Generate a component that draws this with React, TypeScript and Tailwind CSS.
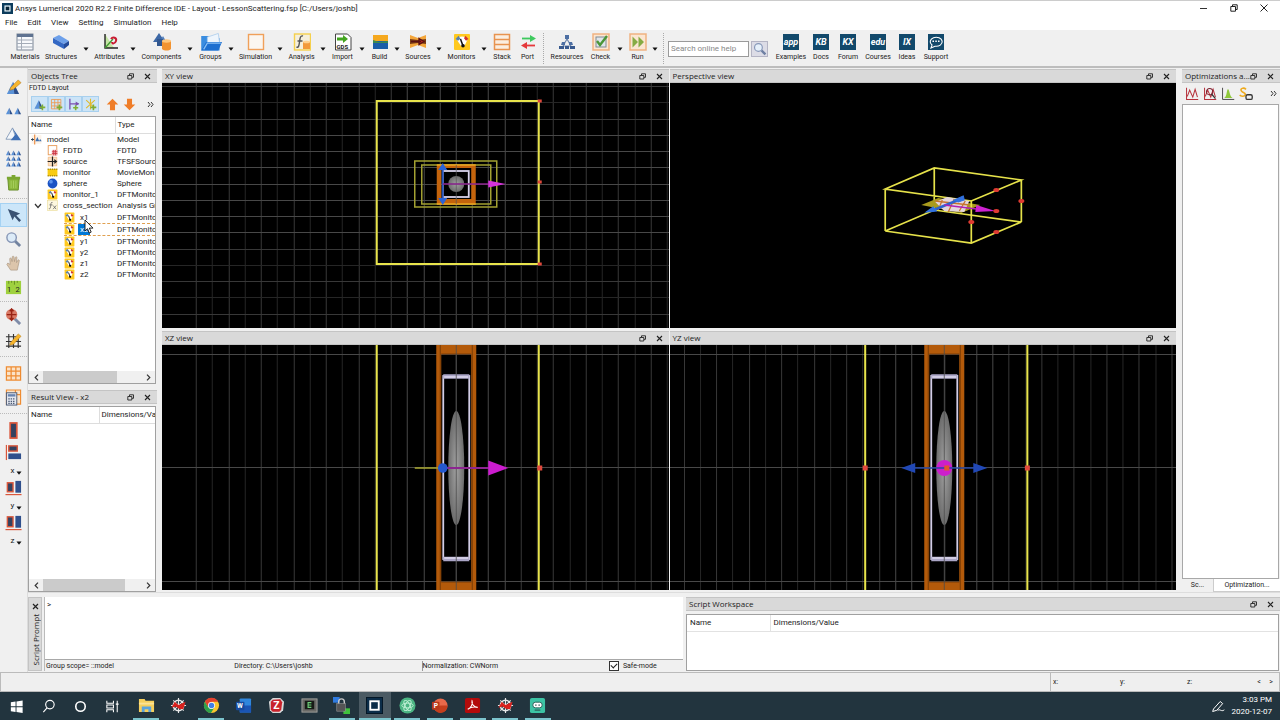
import React from "react";

type Draw = React.ReactNode;

function Ico({ s = 18, children }: { s?: number; children?: Draw }) {
  return (
    <svg width={s} height={s} viewBox="0 0 18 18" fill="none" className="shrink-0" aria-hidden="true">
      {children}
    </svg>
  );
}

function Badge({ label }: { label: string }) {
  return (
    <span className="flex h-4 w-4 items-center justify-center bg-[#12496b] text-[9px] leading-none font-bold text-white italic">
      {label}
    </span>
  );
}

const Caret = () => (
  <svg width="6" height="4" viewBox="0 0 6 4" aria-hidden="true">
    <path d="M0.5 0.5h5L3 3.7z" fill="#111" />
  </svg>
);

const monitorIcon = (s: number) => (
  <Ico s={s}>
    <rect x="1" y="1" width="16" height="16" rx="1" fill="#ffc91f" />
    <path d="M3 5.500a8 6 0 0 1 12 0L11.500 13H8z" fill="#fff" />
    <path d="M2.500 6L5.500 2.800l2 3-2.500 2z" fill="#5b82a8" />
    <path d="M15.500 6L12.500 2.800l-1.500 2.400 2 2.600z" fill="#d2342a" />
    <path d="M7.500 6l2.500 7" stroke="#111" strokeWidth="1.500" />
    <circle cx="10" cy="12.800" r="1.800" fill="#111" />
  </Ico>
);

type Tool = { name: string; w: string; icon: Draw; menu?: boolean };

const mainTools: Tool[] = [
  {
    name: "Materials",
    w: "w-8",
    icon: (
      <Ico>
        <rect x="1" y="1" width="16" height="16" fill="#f7f9fc" stroke="#7d8797" />
        <rect x="1" y="1" width="16" height="3" fill="#5f7391" />
        <path d="M1 7h16M1 10.5h16M1 14h16M5.5 4v13" stroke="#a4acb8" />
      </Ico>
    ),
  },
  {
    name: "Structures",
    w: "w-10",
    menu: true,
    icon: (
      <Ico>
        <path d="M1 5l6-3 10 6-5 3z" fill="#6da0ea" />
        <path d="M1 5l11 6v5L1 10z" fill="#3468c4" />
        <path d="M12 11l5-3v4l-5 4z" fill="#234a99" />
      </Ico>
    ),
  },
  {
    name: "Attributes",
    w: "w-[37px]",
    menu: true,
    icon: (
      <Ico>
        <path d="M4 1l9 14H4z" fill="#c4e6a3" />
        <path d="M4 1v14h13" stroke="#222" strokeWidth="1.4" />
        <path d="M4 15l8-9" stroke="#3f9a30" strokeWidth="1.3" />
        <path d="M10 6c2-3 6-1 5 2s-4 3-4 1" stroke="#c81d32" strokeWidth="2" />
      </Ico>
    ),
  },
  {
    name: "Components",
    w: "w-[47px]",
    menu: true,
    icon: (
      <Ico>
        <path d="M6 0l6 9H0z" fill="#3d68a6" />
        <path d="M10 3l4 7H6z" fill="#4f7dbb" />
        <path d="M4 6h6v7H4z" fill="#32578f" />
        <path d="M9 8h9v8c-2 2-7 2-9 0z" fill="#f29331" />
        <ellipse cx="13.500" cy="8" rx="4.500" ry="1.700" fill="#ffc77d" />
      </Ico>
    ),
  },
  {
    name: "Groups",
    w: "w-[31px]",
    menu: true,
    icon: (
      <Ico s={22}>
        <path d="M1 4h6l1 2h8v10H1z" fill="#3a8de0" />
        <path d="M6 5l9-3 1 8H6z" fill="#eef5fc" stroke="#a5c8ea" strokeWidth=".6" />
        <path d="M1 16l4-7h13l-3 7z" fill="#1d6fd0" />
        <path d="M3 15l3-5h11" stroke="#8cc2f5" />
      </Ico>
    ),
  },
  {
    name: "Simulation",
    w: "w-[39px]",
    menu: true,
    icon: (
      <Ico>
        <rect x="1.500" y="1.500" width="15" height="15" fill="#fbf6f0" stroke="#f0a05a" strokeWidth="1.400" />
      </Ico>
    ),
  },
  {
    name: "Analysis",
    w: "w-[33px]",
    menu: true,
    icon: (
      <Ico>
        <rect x="1.500" y="1" width="16" height="16" fill="#f5efdc" stroke="#f5d04c" strokeWidth="1.400" />
        <path d="M10 3c-3-1-3 3-3.500 6S6 15 3.500 14M4.500 8h5" stroke="#555" strokeWidth="1.400" />
        <path d="M10 9h7v7h-7z" fill="#f29a3c" />
        <ellipse cx="13.500" cy="9" rx="3.500" ry="1.300" fill="#ffd08e" />
      </Ico>
    ),
  },
  {
    name: "Import",
    w: "w-[29px]",
    menu: true,
    icon: (
      <Ico>
        <path d="M1.500 1h12l3.500 3.500V17H1.500z" fill="#fff" stroke="#444" />
        <path d="M3 4.500h6V2l5 4-5 4V7.500H3z" fill="#43a51f" />
        <text x="2.500" y="15.500" fontSize="6" fontWeight="bold" fill="#222">
          GDS
        </text>
      </Ico>
    ),
  },
  {
    name: "Build",
    w: "w-[25px]",
    menu: true,
    icon: (
      <Ico>
        <path d="M2 2h15v8H2z" fill="#f5a81e" />
        <path d="M2 8l15 0v8H2z" fill="#1b5da8" />
        <path d="M2 7l6 2 9-1v2H2z" fill="#3c8b4f" />
      </Ico>
    ),
  },
  {
    name: "Sources",
    w: "w-8",
    menu: true,
    icon: (
      <Ico>
        <path d="M1 2l8 3 8-3v13l-8-3-8 3z" fill="#f3a53a" />
        <path d="M1 6l8 1 8-1v5l-8-1-8 1z" fill="#7a3a12" />
        <path d="M2 8.500h10M10 5.500l5 3-5 3z" stroke="#5c1010" fill="#b3261b" strokeWidth="1.300" />
      </Ico>
    ),
  },
  { name: "Monitors", w: "w-[35px]", menu: true, icon: monitorIcon(18) },
  {
    name: "Stack",
    w: "w-[26px]",
    icon: (
      <Ico>
        <path d="M1.500 1.500h15v15h-15zM1.500 6.500h15M1.500 11.500h15" fill="#fbeee0" stroke="#e8934f" strokeWidth="1.500" />
      </Ico>
    ),
  },
  {
    name: "Port",
    w: "w-[25px]",
    icon: (
      <Ico>
        <path d="M3 5.500h9" stroke="#3ec95e" strokeWidth="1.800" />
        <path d="M11 2l6 3.500L11 9z" fill="#3ec95e" />
        <path d="M7 12.500h9" stroke="#e5383b" strokeWidth="1.800" />
        <path d="M8 9l-6 3.500L8 16z" fill="#e5383b" />
      </Ico>
    ),
  },
];

const runTools: Tool[] = [
  {
    name: "Resources",
    w: "w-[38px]",
    icon: (
      <Ico>
        <path d="M9 6L5 13M9 6l4 7M5 13h8" stroke="#6d86ad" strokeWidth="1.200" />
        <path d="M7 2h4v4H7z" fill="#4d6fa3" />
        <path d="M4 9h3v3H3zM11 9h3l1 3h-4z" fill="#4d6fa3" />
        <path d="M1 13h5v3H1zM12 13h5v3h-5zM7 13h4v3H7z" fill="#38598e" />
      </Ico>
    ),
  },
  {
    name: "Check",
    w: "w-[29px]",
    menu: true,
    icon: (
      <Ico>
        <rect x="1" y="1" width="16" height="16" fill="#fbe6d2" stroke="#efb281" strokeWidth="1.500" />
        <rect x="4" y="4" width="10" height="10" fill="#dfe5ea" stroke="#7f8b96" />
        <path d="M5 8l3 4 7-9" stroke="#4a9638" strokeWidth="2.400" />
      </Ico>
    ),
  },
  {
    name: "Run",
    w: "w-[25px]",
    menu: true,
    icon: (
      <Ico>
        <rect x="1" y="1" width="16" height="16" fill="#fbe6d2" stroke="#efb281" strokeWidth="1.500" />
        <path d="M3.500 3.500L9 9l-5.500 5.500zM9.500 3.500L15 9l-5.500 5.500z" fill="#86ab43" />
      </Ico>
    ),
  },
];

const helpTools: Tool[] = [
  { name: "Examples", w: "w-[34px]", icon: <Badge label="app" /> },
  { name: "Docs", w: "w-[26px]", icon: <Badge label="KB" /> },
  { name: "Forum", w: "w-7", icon: <Badge label="KX" /> },
  { name: "Courses", w: "w-8", icon: <Badge label="edu" /> },
  { name: "Ideas", w: "w-[26px]", icon: <Badge label="IX" /> },
  {
    name: "Support",
    w: "w-8",
    icon: (
      <Ico>
        <rect x="1" y="1" width="16" height="16" fill="#12496b" />
        <path d="M4 15l1-3a6 4.500 0 1 1 3 1.200z" stroke="#fff" strokeWidth="1.100" />
        <path d="M5.500 8.300h1.500M8.300 8.300h1.500M11 8.300h1.500" stroke="#fff" strokeWidth="1.500" />
      </Ico>
    ),
  },
];

function ToolButtons({ tools }: { tools: Tool[] }) {
  return (
    <>
      {tools.map((t) => (
        <div key={t.name} className="flex shrink-0">
          <button className={`flex flex-col items-center text-[7px] leading-[10px] text-[#222] ${t.w}`}>
            <span className="flex h-[18px] items-center">{t.icon}</span>
            <span className="mt-px">{t.name}</span>
          </button>
          {t.menu && (
            <button aria-label={`${t.name} menu`} className="flex w-2.5 items-center justify-center">
              <Caret />
            </button>
          )}
        </div>
      ))}
    </>
  );
}

const Grip = () => <div className="mx-[3px] w-0.5 border-l border-dotted border-[#aaa]" />;

function DockTitle({ title }: { title: string }) {
  return (
    <div className="flex h-[14px] shrink-0 items-center border-y border-[#c4c4c4] bg-[#d9d9d9] pr-1.5 pl-[3px] font-['Open_Sans','Noto_Sans',sans-serif] text-[8px] text-[#222]">
      <h2 className="pb-0.5 whitespace-nowrap">{title}</h2>
      <div className="ml-auto flex items-center gap-2.5">
        <button aria-label="Float">
          <svg width="7" height="7" viewBox="0 0 7 7" fill="none" stroke="#222" className="block">
            <path d="M2.500 2V.8h4v3.500H5M.8 2.500h4v3.500h-4z" strokeWidth=".9" />
          </svg>
        </button>
        <button aria-label="Close">
          <svg width="7" height="7" viewBox="0 0 7 7" stroke="#222" strokeWidth="1.100" className="block">
            <path d="M1 1l5 5M6 1L1 6" />
          </svg>
        </button>
      </div>
    </div>
  );
}

function HScroll({ thumb }: { thumb: string }) {
  return (
    <div className="mt-auto flex h-3 shrink-0 items-stretch bg-[#f0f0f0]">
      <button aria-label="Scroll left" className="flex w-[14px] items-center justify-center">
        <svg width="5" height="7" viewBox="0 0 5 7" fill="none" stroke="#333" strokeWidth="1.200">
          <path d="M4 .7L1.200 3.500 4 6.300" />
        </svg>
      </button>
      <div className="flex-1">
        <div className={`h-full bg-[#cbcbcb] ${thumb}`} />
      </div>
      <button aria-label="Scroll right" className="flex w-[14px] items-center justify-center">
        <svg width="5" height="7" viewBox="0 0 5 7" fill="none" stroke="#333" strokeWidth="1.200">
          <path d="M1 .7l2.800 2.800L1 6.300" />
        </svg>
      </button>
    </div>
  );
}

const More = ({ label }: { label: string }) => (
  <button aria-label={label} className="ml-auto pr-[3px]">
    <svg width="7" height="7" viewBox="0 0 7 7" fill="none" stroke="#333" className="block">
      <path d="M1 1l2 2.500L1 6M4 1l2 2.500L4 6" />
    </svg>
  </button>
);

/* ---------- left tool strip ---------- */

const pyramid = (x: number, y: number, k: number) => (
  <g key={`${x}-${y}`}>
    <path d={`M${x} ${y + k}L${x + k / 2} ${y}L${x + k * 0.6} ${y + k}z`} fill="#5a92d8" />
    <path d={`M${x + k / 2} ${y}L${x + k} ${y + k}H${x + k * 0.6}z`} fill="#2c4f8c" />
  </g>
);

const strip: { name: string; h: string; icon: Draw; on?: boolean; sep?: string; axis?: string }[] = [
  {
    name: "Edit",
    h: "h-6",
    icon: (
      <Ico s={17}>
        {pyramid(2, 4, 13)}
        <path d="M6 10l8-8 3 3-8 7-4 1z" fill="#f7b52c" stroke="#a66a10" strokeWidth=".5" />
      </Ico>
    ),
  },
  { name: "Duplicate", h: "h-6", icon: <Ico s={17}>{pyramid(1, 6, 7)}{pyramid(10, 6, 7)}</Ico> },
  {
    name: "Mirror",
    h: "h-6",
    icon: (
      <Ico s={17}>
        <path d="M1 14L8 2l4 12z" fill="#f4f7fb" stroke="#7d93b3" strokeWidth=".9" />
        <path d="M8 2l9 13H6l5-6z" fill="#3f6fb5" />
      </Ico>
    ),
  },
  {
    name: "Array",
    h: "h-6",
    icon: <Ico s={17}>{[1, 7, 13].flatMap((y) => [1, 6.5, 12].map((x) => pyramid(x, y - 0.5, 5)))}</Ico>,
  },
  {
    name: "Delete",
    h: "h-6",
    icon: (
      <Ico s={17}>
        <path d="M3 5h12l-1 12H4z" fill="#8cb83c" stroke="#668c26" />
        <path d="M2 3h14v2.500H2zM7 1h4v2H7z" fill="#7aa630" />
        <path d="M6.500 7v8M9 7v8M11.500 7v8" stroke="#a9cf60" />
      </Ico>
    ),
  },
  {
    name: "Select",
    h: "h-6",
    on: true,
    sep: "my-1",
    icon: (
      <Ico s={17}>
        <path d="M3 2l5 12 2-4 5 6 2-2-5-5 4-2z" fill="#3a5273" />
      </Ico>
    ),
  },
  {
    name: "Zoom",
    h: "h-6",
    icon: (
      <Ico s={17}>
        <path d="M10 10l6 6" stroke="#7283a0" strokeWidth="3" />
        <circle cx="7" cy="7" r="5" fill="#dcebf8" stroke="#8595b5" strokeWidth="1.500" />
      </Ico>
    ),
  },
  {
    name: "Pan",
    h: "h-6",
    icon: (
      <Ico s={17}>
        <path
          d="M6 16L2 10l1-1.500L5.500 10 5 4c0-1 1.500-1 1.800 0L7.500 7l.2-5c0-1 1.600-1 1.800 0L10 7l1-4.500c.3-1 1.700-.8 1.600.3L12.200 8l1.500-2.500c.5-.8 1.700-.2 1.400.7L13 16z"
          fill="#dcc5ab"
          stroke="#a8957f"
          strokeWidth=".7"
        />
      </Ico>
    ),
  },
  {
    name: "Ruler",
    h: "h-6",
    icon: (
      <Ico s={17}>
        <rect x="1" y="2" width="16" height="14" fill="#9fd13f" />
        <path d="M4 2v3M7 2v2M10 2v4M13 2v2" stroke="#557a1c" strokeWidth=".8" />
        <text x="2" y="14" fontSize="8" fill="#222">
          1
        </text>
        <text x="11" y="14" fontSize="8" fill="#222">
          2
        </text>
      </Ico>
    ),
  },
  {
    name: "Zoom extent",
    h: "h-6",
    sep: "my-0.5",
    icon: (
      <Ico s={17}>
        <path d="M10 11l6 6" stroke="#7f8ca8" strokeWidth="3" />
        <circle cx="7" cy="7" r="6" fill="#d97a66" />
        <path d="M7 2v10M2 7h10M5 3.500L7 1l2 2.500M5 10.500L7 13l2-2.500" stroke="#9a2415" strokeWidth="1.500" />
      </Ico>
    ),
  },
  {
    name: "Grid",
    h: "h-6",
    icon: (
      <Ico s={17}>
        <path d="M4 2v15M9 2v15M14 6v11M1 5h15M1 10h16M1 15h16" stroke="#333" strokeWidth="1.200" />
        <path d="M6 11l8-9 3 2.500L9 13l-4 1z" fill="#f7b52c" stroke="#b0740f" strokeWidth=".5" />
      </Ico>
    ),
  },
  {
    name: "Mesh",
    h: "h-6",
    sep: "my-1",
    icon: (
      <Ico s={17}>
        <path d="M1.500 2h15v14h-15zM6.500 2v14M11.500 2v14M1.500 6.500h15M1.500 11.500h15" fill="#fbe3c8" stroke="#ee8b31" strokeWidth="1.300" />
      </Ico>
    ),
  },
  {
    name: "Calculator",
    h: "h-6",
    icon: (
      <Ico s={17}>
        <path d="M1.500 1h15v15h-15zM11 1v15M1 6h15" fill="#fbe3c8" stroke="#ee8b31" strokeWidth="1.200" />
        <rect x="1.500" y="4" width="11" height="13" fill="#e3e7ef" stroke="#4b5a75" />
        <rect x="3" y="5.500" width="8" height="2.500" fill="#6783b0" />
        <path d="M3.500 10.500h7.500M3.500 13h7.500M3.500 15.200h7.500" stroke="#4b5a75" strokeWidth="1.300" strokeDasharray="1.500 1" />
      </Ico>
    ),
  },
  {
    name: "Align center",
    h: "h-6",
    sep: "my-1",
    icon: (
      <Ico s={17}>
        <rect x="5.500" y="1" width="7" height="16" fill="#34415f" stroke="#d9573c" strokeWidth="1.800" />
      </Ico>
    ),
  },
  {
    name: "Align x",
    h: "h-[21px]",
    axis: "x",
    icon: (
      <Ico s={17}>
        <path d="M1.500 1v16" stroke="#d9573c" strokeWidth="1.300" />
        <rect x="4" y="2" width="9" height="5.500" fill="#34415f" stroke="#d9573c" strokeWidth="1.500" />
        <rect x="3.500" y="10" width="13.500" height="6" fill="#2f4f8c" />
      </Ico>
    ),
  },
  {
    name: "Align y",
    h: "h-[21px]",
    axis: "y",
    icon: (
      <Ico s={17}>
        <path d="M.5 16.500h17" stroke="#d9573c" strokeWidth="1.300" />
        <rect x="2.500" y="4" width="6" height="9.500" fill="#34415f" stroke="#d9573c" strokeWidth="1.500" />
        <rect x="11" y="2" width="6" height="12.500" fill="#2f4f8c" />
      </Ico>
    ),
  },
  {
    name: "Align z",
    h: "h-[21px]",
    axis: "z",
    icon: (
      <Ico s={17}>
        <path d="M.5 16.500h17" stroke="#d9573c" strokeWidth="1.300" />
        <rect x="2.500" y="3" width="6" height="10.500" fill="#34415f" stroke="#d9573c" strokeWidth="1.500" />
        <rect x="11" y="2" width="6" height="12.500" fill="#2f4f8c" />
      </Ico>
    ),
  },
];

/* ---------- objects tree ---------- */

const fx = (
  <Ico s={11}>
    <rect x="1" y="1" width="16" height="16" fill="#fdf7df" stroke="#eadb95" />
    <path d="M9 4C6 3 6.500 7 6 10s-.500 5-3 4M4 8h5M10 9l5 6M15 9l-5 6" stroke="#666" strokeWidth="1.300" />
  </Ico>
);

const tree: { name: string; type: string; level: number; icon: Draw; open?: boolean; sel?: boolean }[] = [
  {
    name: "model",
    type: "Model",
    level: 0,
    icon: (
      <Ico s={11}>
        <path d="M1 2h16v14H1z" fill="#fdf3e8" />
        <path d="M6 1v16" stroke="#ee9550" strokeWidth="2" />
        <path d="M0 9h5M2.500 7v4" stroke="#345" strokeWidth="1.600" />
        <path d="M7 12l3.500-7 3 7zM13 12l2-4 2.500 4z" fill="#3d6fae" />
      </Ico>
    ),
  },
  {
    name: "FDTD",
    type: "FDTD",
    level: 1,
    icon: (
      <Ico s={11}>
        <rect x="2" y="1" width="14" height="15" fill="#fff" stroke="#e79a57" strokeWidth="1.500" />
        <path d="M8 8h9v9H8z" fill="#f3b6bb" />
        <path d="M8 11h9M8 14h9M11 8v9M14 8v9" stroke="#c9303d" strokeWidth="1.300" />
      </Ico>
    ),
  },
  {
    name: "source",
    type: "TFSFSource",
    level: 1,
    icon: (
      <Ico s={11}>
        <path d="M2 2h14v14H2z" fill="#fbe0c2" stroke="#eeae70" />
        <path d="M9 1v16M1 9h13" stroke="#222" strokeWidth="2" />
        <path d="M12 5l5 4-5 4z" fill="#222" />
      </Ico>
    ),
  },
  {
    name: "monitor",
    type: "MovieMon",
    level: 1,
    icon: (
      <Ico s={11}>
        <path d="M1 3h16v12H1z" fill="#f8cb14" />
        <path d="M1 3.500h16M1 14.500h16" stroke="#7c6000" strokeWidth="1.500" strokeDasharray="2 1.500" />
      </Ico>
    ),
  },
  {
    name: "sphere",
    type: "Sphere",
    level: 1,
    icon: (
      <Ico s={11}>
        <circle cx="9" cy="9" r="8" fill="#1b53c4" />
        <circle cx="6.500" cy="6" r="3" fill="#5b92ec" />
      </Ico>
    ),
  },
  { name: "monitor_1", type: "DFTMonitor", level: 1, icon: monitorIcon(11) },
  { name: "cross_section", type: "Analysis Gr", level: 1, icon: fx, open: true },
  { name: "x1", type: "DFTMonitor", level: 2, icon: monitorIcon(11) },
  { name: "x2", type: "DFTMonitor", level: 2, icon: monitorIcon(11), sel: true },
  { name: "y1", type: "DFTMonitor", level: 2, icon: monitorIcon(11) },
  { name: "y2", type: "DFTMonitor", level: 2, icon: monitorIcon(11) },
  { name: "z1", type: "DFTMonitor", level: 2, icon: monitorIcon(11) },
  { name: "z2", type: "DFTMonitor", level: 2, icon: monitorIcon(11) },
];

const indent = ["pl-0.5", "pl-[3px]", "pl-[35px]"];

const treeTools: Draw[] = [
  <>
    {pyramid(2, 3, 12)}
    <path d="M13 9v8M9 13h8" stroke="#7fae34" strokeWidth="2.200" />
  </>,
  <>
    <path d="M2 2h13v13H2zM2 6.500h13M2 11h13M6.500 2v13M11 2v13" stroke="#ee9a50" strokeWidth="1.200" />
    <path d="M13 9v8M9 13h8" stroke="#7fae34" strokeWidth="2.200" />
  </>,
  <>
    <path d="M4 1v15M4 8h12" stroke="#7a4fb0" strokeWidth="1.800" />
    <path d="M12 5l5 3-5 3z" fill="#7a4fb0" />
    <path d="M12 10v7M8.500 13.500h7" stroke="#7fae34" strokeWidth="2.200" />
  </>,
  <>
    <path d="M3 3l12 11M15 3L3 14M9 1v15" stroke="#e0b92a" strokeWidth="1.500" />
    <path d="M13 9v8M9 13h8" stroke="#7fae34" strokeWidth="2.200" />
  </>,
];

/* ---------- drawings of the four views ---------- */

const steps = Array.from({ length: 33 }, (_, i) => i - 16);
const shade = (i: number) => (Math.abs(i) <= 3 ? "#484848" : i % 2 ? "#262626" : "#383838");

function Vert({ cx, y, h }: { cx: number; y: number; h: number }) {
  return (
    <g>
      {steps.map((i) => (
        <path key={i} d={`M${Math.floor(cx + i * 16.24) + 0.5} ${y}v${h}`} stroke={shade(i)} />
      ))}
    </g>
  );
}

const Handle = ({ x, y }: { x: number; y: number }) => <rect x={x - 2.5} y={y - 2.5} width="5" height="5" fill="#e0483c" />;

function View({ title, box, children }: { title: string; box: string; children: Draw }) {
  return (
    <section className="flex min-h-0 min-w-0 flex-col">
      <DockTitle title={title} />
      <svg viewBox={box} preserveAspectRatio="xMidYMid slice" fill="none" className="min-h-0 w-full flex-1 bg-black" role="img" aria-label={title}>
        {children}
      </svg>
    </section>
  );
}

function Tall({ cx }: { cx: number }) {
  return (
    <g>
      <path d={`M${cx - 20} 345h40v245h-40zM${cx - 15} 354v228h30v-228z`} fill="#b35a0a" fillRule="evenodd" />
      <path d={`M${cx - 16} 345v245M${cx + 16} 345v245M${cx - 15} 354h30M${cx - 15} 582h30`} stroke="#7a3c06" />
      <rect x={cx - 13} y="376" width="26" height="183" stroke="#d3cde6" strokeWidth="1.800" />
      <path d={`M${cx - 13} 376.500h26M${cx - 13} 559h26`} stroke="#aaa5c6" strokeWidth="4.500" />
      <path d={`M${cx - 12} 377h24M${cx - 12} 558h24`} stroke="#dfdaf0" strokeWidth="1.500" />
      <ellipse cx={cx} cy="468" rx="8" ry="57" fill="url(#metal)" />
      <path d={`M${cx} 345v245`} stroke="#4c4c4c" strokeOpacity=".8" />
    </g>
  );
}

/* ---------- task bar ---------- */

const Redstar = () => (
  <Ico>
    <circle cx="9" cy="9" r="5.500" stroke="#e8e8e8" strokeWidth="1.600" />
    <path d="M9 1v16M1 9h16M3.500 3.500l11 11M14.500 3.500l-11 11" stroke="#e8e8e8" strokeWidth="1.200" />
    <path d="M1.500 11.500L5 5l4 3.500L16.500 5 14 13l-4.500-.5L6 10z" fill="#d8201c" />
  </Ico>
);

const apps: { name: string; icon: Draw; run?: boolean; active?: boolean }[] = [
  {
    name: "Files",
    run: true,
    icon: (
      <Ico>
        <path d="M1 2h6l1 2h9v12H1z" fill="#f6cf5c" />
        <path d="M1 6h16v2H1z" fill="#fbe294" />
        <path d="M4 16v-6h10v6h-3v-3H7v3z" fill="#5aa3dd" />
      </Ico>
    ),
  },
  { name: "Solver", icon: <Redstar /> },
  {
    name: "Browser",
    run: true,
    icon: (
      <Ico>
        <circle cx="9" cy="9" r="8" fill="#f9c62f" />
        <path d="M2 5a8 8 0 0 1 14 0H9L5.500 11z" fill="#e2412f" />
        <path d="M2 5a8 8 0 0 0 6.500 12l3.500-6-3 1-4-2z" fill="#2fa04c" />
        <circle cx="9" cy="9" r="3.700" fill="#fff" />
        <circle cx="9" cy="9" r="2.900" fill="#3f7fe8" />
      </Ico>
    ),
  },
  {
    name: "Word",
    icon: (
      <Ico>
        <rect x="5" y="1.500" width="12" height="15" rx="1" fill="#2f86dc" />
        <path d="M5 9h12v7.500H5z" fill="#1a55b5" />
        <rect x="1" y="5" width="9" height="9" rx="1" fill="#164a9e" />
        <text x="2" y="12" fontSize="7" fontWeight="bold" fill="#fff">
          W
        </text>
      </Ico>
    ),
  },
  {
    name: "Zotero",
    icon: (
      <Ico>
        <path d="M5 1h8l4 4-1 9-3 3H5l-3-3-1-9z" fill="#d9d9d9" />
        <path d="M5 3l8-.5 2 3-1 8-2 2H5l-2-2V5z" fill="#c9232c" />
        <text x="5.500" y="13" fontSize="11" fontWeight="bold" fill="#fff">
          Z
        </text>
      </Ico>
    ),
  },
  {
    name: "Editor",
    icon: (
      <Ico>
        <rect x="1" y="2" width="16" height="14" fill="#6a6a67" stroke="#a0a09c" />
        <rect x="4" y="4" width="10" height="9" fill="#171b17" />
        <path d="M11 6H7.500v5H11M7.500 8.500H11" stroke="#6fd07a" strokeWidth="1.200" />
      </Ico>
    ),
  },
  {
    name: "Remote",
    run: true,
    icon: (
      <Ico>
        <path d="M0 0h7v6H0z" fill="#2f7be0" />
        <path d="M11 12h7v6h-7z" fill="#3fc23c" />
        <path d="M6 8V5a3 3 0 0 1 6 0v3" stroke="#c8c8c8" strokeWidth="1.500" />
        <rect x="4" y="7" width="9" height="8" fill="#555" stroke="#999" strokeWidth=".6" />
      </Ico>
    ),
  },
  {
    name: "Lumerical",
    run: true,
    active: true,
    icon: (
      <Ico>
        <rect x=".5" y=".5" width="17" height="17" fill="#0b2c48" stroke="#041624" />
        <rect x="4.500" y="4.500" width="9" height="9" stroke="#fff" strokeWidth="2" />
      </Ico>
    ),
  },
  {
    name: "Atom",
    run: true,
    icon: (
      <Ico>
        <circle cx="9" cy="9" r="8.500" fill="#4cb583" />
        <ellipse cx="9" cy="9" rx="6" ry="2.500" stroke="#bff0d5" transform="rotate(60 9 9)" />
        <ellipse cx="9" cy="9" rx="6" ry="2.500" stroke="#bff0d5" transform="rotate(-60 9 9)" />
        <ellipse cx="9" cy="9" rx="6" ry="2.500" stroke="#bff0d5" />
      </Ico>
    ),
  },
  {
    name: "PowerPoint",
    run: true,
    icon: (
      <Ico>
        <circle cx="10" cy="9" r="7.500" fill="#e8694a" />
        <path d="M10 9h7.500A7.500 7.500 0 0 1 3 12z" fill="#c43e1c" />
        <rect x="1" y="5" width="8" height="8.500" rx="1" fill="#b9381a" />
        <text x="3" y="12" fontSize="7" fontWeight="bold" fill="#fff">
          P
        </text>
      </Ico>
    ),
  },
  {
    name: "Acrobat",
    run: true,
    icon: (
      <Ico>
        <rect x="1" y="1" width="16" height="16" rx="2" fill="#b30b0b" />
        <path d="M4 13c3-1 6-6 4.500-9-1 3 2 7 6 7-4-1-8 0-10.500 2z" stroke="#fff" strokeWidth="1.100" />
      </Ico>
    ),
  },
  { name: "Solver 2", run: true, icon: <Redstar /> },
  {
    name: "Recorder",
    run: true,
    icon: (
      <Ico>
        <rect x="1" y="1" width="16" height="16" rx="2" fill="#3cc3a4" />
        <rect x="4" y="5.500" width="10" height="6" rx="3" fill="#fff" stroke="#2b5e58" />
        <path d="M6.500 8.500h1.500M10 8.500h1.500M6 14h6" stroke="#2b5e58" strokeWidth="1.300" />
      </Ico>
    ),
  },
];

const systemApps: { name: string; icon: Draw }[] = [
  {
    name: "Start",
    icon: <path d="M3 4.500l5-.7v5H3zM9 3.600l6.500-.9v6.100H9zM3 9.700h5v5l-5-.7zM9 9.700h6.500v6.100L9 14.900z" fill="#fff" />,
  },
  {
    name: "Search",
    icon: (
      <g stroke="#fff" strokeWidth="1.200">
        <circle cx="10.500" cy="7" r="4.500" />
        <path d="M7.500 10.500L3.500 15" />
      </g>
    ),
  },
  { name: "Assistant", icon: <circle cx="9" cy="9" r="5" stroke="#fff" strokeWidth="1.700" /> },
  {
    name: "Task view",
    icon: <path d="M3 3v2.500h7V3M3 15v-2.500h7V15M3 7.500h7v3H3zM14 3v12M12.500 6.500h3" stroke="#fff" strokeWidth="1.100" />,
  },
];

export default function App() {
  return (
    <div className="flex h-screen flex-col overflow-hidden bg-[#f0f0f0] font-['Roboto','Open_Sans',sans-serif] text-[8px] leading-[11px] text-[#1c1c1c]">
      <header className="flex h-[15px] shrink-0 items-center border-t border-[#ccc] bg-white pl-0.5">
        <Ico s={11}>
          <rect width="18" height="18" fill="#0c3c5c" />
          <rect x="5" y="5" width="8" height="8" fill="#082436" stroke="#e8f4fa" strokeWidth="2" />
        </Ico>
        <h1 className="ml-0.5">Ansys Lumerical 2020 R2.2 Finite Difference IDE - Layout - LessonScattering.fsp [C:/Users/joshb]</h1>
        <div className="ml-auto flex items-center gap-[22px] pr-3">
          <button aria-label="Minimize">
            <svg width="8" height="8" viewBox="0 0 8 8" stroke="#333" className="block">
              <path d="M0 4.500h7" />
            </svg>
          </button>
          <button aria-label="Restore">
            <svg width="8" height="8" viewBox="0 0 8 8" stroke="#222" fill="none" className="block">
              <path d="M2.500 2V.8h4.700v4.700H6M.8 2.500h4.700v4.700H.8z" />
            </svg>
          </button>
          <button aria-label="Close window">
            <svg width="8" height="8" viewBox="0 0 8 8" stroke="#222" className="block">
              <path d="M.5.5l7 7M7.500.5l-7 7" />
            </svg>
          </button>
        </div>
      </header>

      <nav className="flex h-[15px] shrink-0 items-center gap-2.5 bg-white pl-[5px]">
        {["File", "Edit", "View", "Setting", "Simulation", "Help"].map((m) => (
          <button key={m}>{m}</button>
        ))}
      </nav>

      <div className="flex h-9 shrink-0 items-stretch pt-[3px] pb-0.5 pl-[9px]">
        <ToolButtons tools={mainTools} />
        <Grip />
        <ToolButtons tools={runTools} />
        <Grip />
        <form className="mr-1.5 flex items-center gap-0.5" onSubmit={(e) => e.preventDefault()}>
          <input
            aria-label="Search online help"
            placeholder="Search online help"
            className="h-4 w-[81px] border border-[#9a9a9a] bg-white px-0.5 text-[8px] placeholder:text-[#888]"
          />
          <button aria-label="Search" className="flex h-4 w-[17px] items-center justify-center border border-[#b4b4c4] bg-[#dcdce6]">
            <Ico s={14}>
              <path d="M10 10l6 6" stroke="#6f80a3" strokeWidth="3" />
              <circle cx="7" cy="7" r="5" fill="#e6f0fa" stroke="#8797b8" strokeWidth="1.500" />
            </Ico>
          </button>
        </form>
        <ToolButtons tools={helpTools} />
      </div>

      <div className="flex min-h-0 flex-1 border-t-2 border-[#bdbdbd]">
        <aside className="flex w-7 shrink-0 flex-col border-r border-[#dcdcdc] pt-1.5">
          {strip.map((t) => (
            <React.Fragment key={t.name}>
              {t.sep && <div className={`border-t border-dotted border-[#bbb] ${t.sep}`} />}
              <button
                aria-label={t.name}
                className={`flex shrink-0 items-center justify-center ${t.h} ${t.on ? "border border-[#a5d2f3] bg-[#cce6f9]" : ""}`}
              >
                {t.icon}
              </button>
              {t.axis && (
                <button className="flex h-[14px] shrink-0 items-center justify-center gap-0.5 pl-1.5 text-[8px]">
                  {t.axis}
                  <span className="pt-1.5">
                    <Caret />
                  </span>
                </button>
              )}
            </React.Fragment>
          ))}
        </aside>

        <div className="flex min-w-0 flex-1 flex-col">
          <div className="flex min-h-0 flex-1 pt-px">
            <div className="flex w-[129px] shrink-0 flex-col">
              <section className="flex h-[315px] flex-col">
                <DockTitle title="Objects Tree" />
                <p className="h-[11px] pl-px text-[7px] leading-[10px]">FDTD Layout</p>
                <div className="flex h-5 items-center pl-[3px]">
                  {treeTools.map((d, i) => (
                    <button key={i} aria-label={`Add object ${i + 1}`} className="flex h-4 w-[17px] items-center justify-center border border-[#a8d0ee] bg-[#cce4f7]">
                      <Ico s={13}>{d}</Ico>
                    </button>
                  ))}
                  <button aria-label="Move up" className="ml-[7px]">
                    <Ico s={13}>
                      <path d="M9 1l8 8h-4.500v8h-7V9H1z" fill="#ef7d28" />
                    </Ico>
                  </button>
                  <button aria-label="Move down" className="ml-1">
                    <Ico s={13}>
                      <path d="M9 17l8-8h-4.500V1h-7v8H1z" fill="#ef7d28" />
                    </Ico>
                  </button>
                  <More label="More" />
                </div>
                <div className="relative mt-0.5 mr-px flex min-h-0 flex-1 flex-col overflow-hidden border border-[#a0a0a0] bg-white">
                  <table className="w-full table-fixed border-collapse text-left">
                    <thead>
                      <tr className="h-4 border-b border-[#ddd]">
                        <th className="w-[86px] border-r border-[#ddd] pl-0.5 font-normal">Name</th>
                        <th className="pl-0.5 font-normal">Type</th>
                      </tr>
                    </thead>
                  </table>
                  <table className="h-[147px] w-full table-fixed border-collapse text-left">
                    <tbody>
                      {tree.map((r) => (
                        <tr key={r.name}>
                          <td className={`w-[86px] p-0 ${indent[r.level]}`}>
                            <span className={`flex items-center gap-[3px] ${r.sel ? "border-y border-dashed border-[#e0a050]" : ""}`}>
                              {r.level === 1 && (
                                <span className="flex w-3 justify-center">
                                  {r.open && (
                                    <svg width="8" height="6" viewBox="0 0 8 6" fill="none" stroke="#333" strokeWidth="1.200">
                                      <path d="M1 1l3 3.500L7 1" />
                                    </svg>
                                  )}
                                </span>
                              )}
                              {r.icon}
                              <span className={r.sel ? "bg-[#0078d7] px-0.5 text-white" : "px-0.5"}>{r.name}</span>
                            </span>
                          </td>
                          <td className="overflow-hidden p-0 pl-0.5 whitespace-nowrap">
                            <span className={r.sel ? "block border-y border-dashed border-[#e0a050]" : "block"}>{r.type}</span>
                          </td>
                        </tr>
                      ))}
                    </tbody>
                  </table>
                  <svg width="10" height="15" viewBox="0 0 10 15" className="absolute top-[102px] left-[55px]" aria-hidden="true">
                    <path d="M1 1v11l2.500-2.300L5.200 14l2-.9-1.800-4H9z" fill="#fff" stroke="#111" strokeWidth=".9" />
                  </svg>
                  <HScroll thumb="w-3/4" />
                </div>
              </section>
              <section className="mt-1.5 flex min-h-0 flex-1 flex-col">
                <DockTitle title="Result View - x2" />
                <div className="mt-0.5 mr-px flex min-h-0 flex-1 flex-col overflow-hidden border border-[#a0a0a0] bg-white">
                  <table className="w-full table-fixed border-collapse text-left">
                    <thead>
                      <tr className="h-4 border-b border-[#ddd]">
                        <th className="w-[70px] border-r border-[#ddd] pl-0.5 font-normal">Name</th>
                        <th className="overflow-hidden pl-0.5 font-normal whitespace-nowrap">Dimensions/Va</th>
                      </tr>
                    </thead>
                  </table>
                  <HScroll thumb="w-5/6" />
                </div>
              </section>
            </div>

            <main className="mr-1.5 ml-[5px] grid min-w-0 flex-1 grid-cols-2 grid-rows-2 gap-x-px gap-y-[3px] pb-0.5">
              <View title="XY view" box="162 83 507 245">
                <defs>
                  <radialGradient id="metal">
                    <stop offset="0" stopColor="#a2a2a2" />
                    <stop offset="1" stopColor="#6c6c6c" />
                  </radialGradient>
                </defs>
                <Vert cx={456.5} y={83} h={245} />
                {steps.slice(8, 26).map((i) => (
                  <path key={i} d={`M150 ${Math.floor(184 + i * 16.25) + 0.5}h540`} stroke={shade(i)} />
                ))}
                <rect x="377" y="101" width="162" height="163" stroke="#e8e44c" strokeWidth="2" />
                <rect x="415" y="161" width="82" height="46" stroke="#a3a132" strokeWidth="1.500" />
                <rect x="422" y="165" width="69" height="39" stroke="#a3a132" strokeWidth="1.500" />
                <path d="M437 165h39v39h-39zM441.500 168v31h30v-31z" fill="#c4640c" fillRule="evenodd" />
                <path d="M437 165h39M437 204h39" stroke="#eda822" strokeWidth="1.500" />
                <rect x="443" y="171" width="26" height="26" fill="#000" stroke="#d8d2ec" strokeWidth="1.800" />
                <circle cx="456.500" cy="184" r="8" fill="url(#metal)" />
                <path d="M456.500 165v39M441 184h30" stroke="#555" strokeOpacity=".7" />
                <path d="M443 167v34" stroke="#2453bd" strokeWidth="1.800" />
                <path d="M443 163l4.500 7h-9zM443 205l4.500-7h-9z" fill="#2a63d8" />
                <path d="M443 184h46" stroke="#8c2590" strokeWidth="1.500" />
                <path d="M488.500 180.500v7l17.500-3.500z" fill="#d633da" />
                <path d="M538 101h4M538 182h4M538 264h4" stroke="#e0483c" strokeWidth="3" />
              </View>

              <View title="Perspective view" box="670 83 506 245">
                <g stroke="#e6e24a" strokeWidth="1.700">
                  <path d="M885 189l49-21 87 12-50 21zM885 231l86 12 50-21M885 189v42M934 168v42M1021 180v42M885 231l49-21 87 12" />
                </g>
                <path d="M921 205l17-7 42 7-19 8z" fill="#a99b1e" />
                <path d="M935 202l12-5 22 4-5 11-20-1z" fill="#e3d5de" />
                <path d="M938 210l4-10M948 212l6-13M959 211l6-10M935 201l34 4" stroke="#c7752e" strokeWidth="1.300" />
                <path d="M971 201v42" stroke="#e6e24a" strokeWidth="1.700" />
                <path d="M931 211l27-11" stroke="#2d62cf" strokeWidth="2.500" />
                <path d="M926 212l7-5 3 4zM954 200l9-4 1 4-6 2z" fill="#3272e0" stroke="#3272e0" />
                <path d="M944 205l32 4" stroke="#b020b5" strokeWidth="1.500" />
                <path d="M976 205l19 6-20 1z" fill="#cf22d2" />
                {[
                  [996, 190],
                  [1021, 201],
                  [996, 211],
                  [971, 222],
                  [996, 232],
                ].map(([x, y]) => (
                  <ellipse key={`${x}-${y}`} cx={x} cy={y} rx="3" ry="2" fill="#de3b32" />
                ))}
              </View>

              <View title="XZ view" box="162 345 507 245">
                <Vert cx={456.5} y={345} h={245} />
                <path d="M150 354.500h530M150 467.500h530M150 581.500h530" stroke="#484848" />
                <path d="M377 345v245M539 345v245" stroke="#e8e44c" strokeWidth="2" />
                <Tall cx={456.5} />
                <path d="M415 468h24" stroke="#a3a132" strokeWidth="1.600" />
                <path d="M443 468h46" stroke="#8c2590" strokeWidth="1.800" />
                <path d="M488.500 460.500v15l20-7.500z" fill="#cc1ccf" />
                <circle cx="443" cy="468" r="4.800" fill="#2458cf" />
                <Handle x={540} y={468} />
              </View>

              <View title="YZ view" box="670 345 506 245">
                <Vert cx={944} y={345} h={245} />
                <path d="M660 354.500h530M660 467.500h530M660 581.500h530" stroke="#484848" />
                <path d="M865 345v245M1027 345v245" stroke="#e8e44c" strokeWidth="2" />
                <Tall cx={944} />
                <circle cx="944" cy="468" r="8" fill="#cc1fcb" />
                <path d="M914 468h60" stroke="#2447a5" strokeWidth="1.600" />
                <path d="M915 463v10l-14-5zM973 463v10l14-5z" fill="#2148b5" />
                <rect x="944" y="465.500" width="5" height="5" fill="#e4532e" />
                <Handle x={865} y={468} />
                <Handle x={1027} y={468} />
              </View>
            </main>

            <section className="flex w-[98px] shrink-0 flex-col">
              <DockTitle title="Optimizations a..." />
              <div className="flex h-[21px] items-center gap-1 pl-[3px]">
                {[
                  <path key="a" d="M2 1v15h15M3 12l3-8 4 9 3-10 3 10" stroke="#b5303a" strokeWidth="1.300" />,
                  <g key="b">
                    <path d="M2 1v15h15M3 12l3-8 4 9 3-10 3 10" stroke="#b5303a" strokeWidth="1.300" />
                    <circle cx="8.500" cy="6" r="4" stroke="#7c2030" strokeWidth="1.300" />
                    <path d="M11 9l5 6" stroke="#333" strokeWidth="1.600" />
                  </g>,
                  <g key="c">
                    <path d="M4 14c4-1 3-11 5-11s2 10 6 11z" fill="#8fc93a" />
                    <path d="M2 1v15h15" stroke="#444" strokeWidth="1.200" />
                  </g>,
                  <g key="d">
                    <path d="M9 3C6 0 1 2 3 5s6 2 5 5-6 2-7 0" stroke="#eeaa1e" strokeWidth="2" />
                    <rect x="9" y="10" width="8" height="6" rx="2" stroke="#333" strokeWidth="1.700" />
                  </g>,
                ].map((d, i) => (
                  <button key={i} aria-label={`Optimization tool ${i + 1}`}>
                    <Ico s={14}>{d}</Ico>
                  </button>
                ))}
                <More label="More tools" />
              </div>
              <div className="mr-px flex-1 border border-[#a8a8a8] bg-white" />
              <div role="tablist" className="flex h-[13px] text-[7px]">
                <button role="tab" className="w-8 border-r border-[#ccc]">
                  Sc...
                </button>
                <button role="tab" aria-selected="true" className="flex-1 border-b border-[#ccc] bg-white">
                  Optimization...
                </button>
              </div>
            </section>
          </div>

          <div className="flex h-20 shrink-0 border-t border-[#ddd] pt-1 pb-px">
            <section className="flex min-w-0 flex-[655_1_0%]">
              <div className="mr-0.5 flex w-[14px] shrink-0 flex-col items-center gap-1 border border-[#c4c4c4] bg-[#d9d9d9] pt-[5px]">
                <button aria-label="Close script prompt">
                  <svg width="7" height="7" viewBox="0 0 7 7" stroke="#222" strokeWidth="1.200" className="block">
                    <path d="M1 1l5 5M6 1L1 6" />
                  </svg>
                </button>
                <h2 className="rotate-180 font-['Open_Sans','Noto_Sans',sans-serif] text-[8px] whitespace-nowrap [writing-mode:vertical-rl]">Script Prompt</h2>
              </div>
              <div className="flex min-w-0 flex-1 flex-col border-l border-[#bbb]">
                <textarea aria-label="Script prompt" defaultValue=">" className="block min-h-0 w-full flex-1 resize-none border-0 bg-white p-0.5 leading-[11px]" />
                <div className="grid h-3 shrink-0 grid-cols-[188fr_187fr_187fr_74fr] items-center border-t border-[#a8a8a8] pl-px text-[7px] leading-[10px]">
                  <span>Group scope= ::model</span>
                  <span>Directory: C:\Users\joshb</span>
                  <span className="border-l border-[#999]">Normalization: CWNorm</span>
                  <label className="flex items-center gap-1">
                    <input
                      type="checkbox"
                      defaultChecked
                      className="relative h-2.5 w-2.5 appearance-none border border-[#333] bg-white checked:after:absolute checked:after:top-0 checked:after:left-0.5 checked:after:h-1.5 checked:after:w-1 checked:after:rotate-45 checked:after:border-r checked:after:border-b checked:after:border-[#222] checked:after:content-['']"
                    />
                    Safe-mode
                  </label>
                </div>
              </div>
            </section>
            <section className="ml-[3px] flex min-w-0 flex-[594_1_0%] flex-col">
              <DockTitle title="Script Workspace" />
              <div className="mt-[3px] mr-px min-h-0 flex-1 border border-[#a0a0a0] bg-white">
                <table className="w-full table-fixed border-collapse text-left">
                  <thead>
                    <tr className="h-4 border-b border-[#e2e2e2]">
                      <th className="w-[83px] border-r border-[#e2e2e2] pl-[3px] font-normal">Name</th>
                      <th className="pl-[3px] font-normal">Dimensions/Value</th>
                    </tr>
                  </thead>
                </table>
              </div>
            </section>
          </div>
        </div>
      </div>

      <footer className="flex h-5 shrink-0 items-stretch justify-end border border-[#bbb] bg-[#efefef] text-[7px]">
        <div className="flex w-[229px] items-center border-l border-[#bbb] pl-0.5">
          <span className="w-[67px]">x:</span>
          <span className="w-[67px]">y:</span>
          <span className="flex-1">z:</span>
          <button className="w-3">&lt;</button>
          <button className="mr-0.5 w-3">&gt;</button>
        </div>
      </footer>

      <div className="flex h-7 shrink-0 items-stretch bg-[#22343e] text-white">
        {systemApps.map((a) => (
          <button key={a.name} aria-label={a.name} className="flex w-8 items-center justify-center">
            <Ico s={17}>{a.icon}</Ico>
          </button>
        ))}
        <div className="ml-0.5 flex w-[424px] justify-between">
          {apps.map((a) => (
            <button key={a.name} aria-label={a.name} className={`flex w-8 flex-col items-center justify-end ${a.active ? "bg-[#4b5a63]" : ""}`}>
              <span className="flex flex-1 items-center">
                <Ico s={17}>{a.icon}</Ico>
              </span>
              <span className={a.run ? (a.active ? "h-0.5 w-8 bg-[#7cc4cd]" : "h-0.5 w-[26px] bg-[#7cc4cd]") : "h-0.5"} />
            </button>
          ))}
        </div>
        <div className="ml-auto flex items-center gap-1.5 pr-2">
          <Ico s={15}>
            <path d="M3 12l8-9 3 2.500-7 8-5 1.500zM8 14c3-3 4 2 8-1" stroke="#fff" strokeWidth="1.200" />
          </Ico>
          <time className="text-right leading-3">
            3:03 PM
            <br />
            2020-12-07
          </time>
        </div>
      </div>
    </div>
  );
}
